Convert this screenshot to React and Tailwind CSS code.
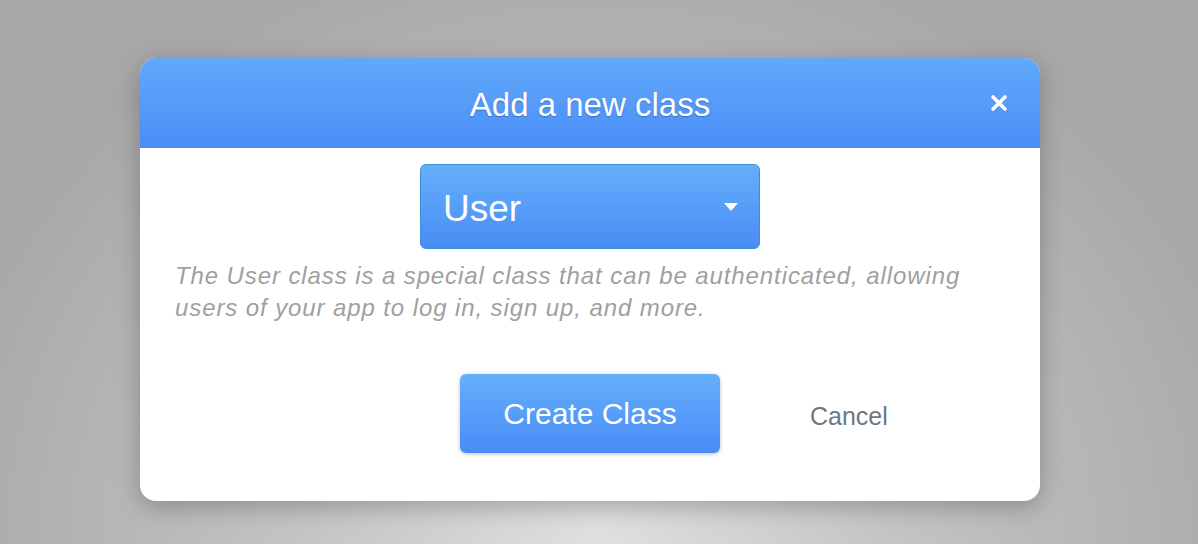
import React from "react";

export default function App() {
  return (
    <div
      className="w-[1198px] h-[544px] overflow-hidden flex items-start pl-[140px] pt-[58px] bg-[radial-gradient(ellipse_at_50%_100%,#e0e0e0_0%,#c4c4c4_35%,#a8a8a8_80%)]"
      style={{ fontFamily: '"Liberation Sans", Arial, sans-serif' }}
    >
      <div className="w-[900px] h-[443px] rounded-[16px] bg-white overflow-hidden shadow-[0_6px_24px_rgba(0,0,0,0.25)] flex flex-col">
        {/* header */}
        <div className="relative h-[90px] flex items-center justify-center bg-gradient-to-b from-[#61a9fa] to-[#4a8df7]">
          <h1 className="mt-[3px] text-[33px] text-white [text-shadow:0_1px_1px_rgba(30,80,160,0.55)]">Add a new class</h1>
          <button className="absolute right-[30px] top-[34px] w-[22px] h-[22px] flex items-center justify-center">
            <svg width="18" height="18" viewBox="0 0 18 18">
              <path d="M3 3 L15 15 M15 3 L3 15" stroke="white" strokeWidth="3.6" strokeLinecap="round" />
            </svg>
          </button>
        </div>

        {/* body */}
        <div className="flex flex-col items-center pt-[16px]">
          <div className="w-[340px] h-[85px] rounded-[6px] border border-[#3f8ed3] bg-gradient-to-b from-[#64affb] to-[#4a8cf5] flex items-center justify-between pl-[22px] pr-[20px]">
            <span className="mt-[4px] text-[37px] text-white">User</span>
            <svg width="16" height="10" viewBox="0 0 16 10">
              <path d="M1 1 L15 1 L8 9 Z" fill="white" />
            </svg>
          </div>
        </div>
        <p className="mt-[11px] pl-[35px] w-[870px] text-[24px] tracking-[0.9px] leading-[32px] italic text-[#a0a0a0]">
          The User class is a special class that can be authenticated, allowing users of your app to log in, sign up, and more.
        </p>

        <div className="flex items-center pl-[320px] mt-[50px]">
          <button className="w-[260px] h-[79px] rounded-[6px] bg-gradient-to-b from-[#64affb] to-[#4a8cf5] shadow-[0_1px_4px_rgba(0,0,0,0.25)] text-[30px] text-white">
            Create Class
          </button>
          <button className="ml-[90px] mt-[6px] text-[25px] text-[#6b7885]">Cancel</button>
        </div>
      </div>
    </div>
  );
}
